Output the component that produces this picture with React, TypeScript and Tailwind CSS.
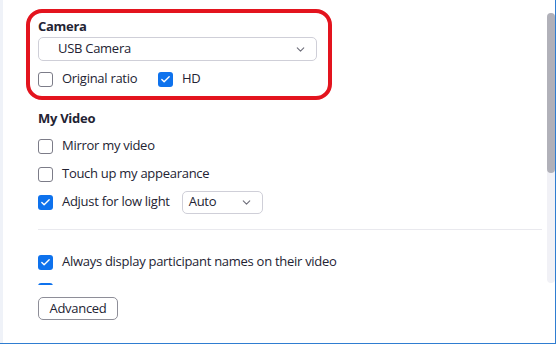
import { ChevronDown, Check } from "lucide-react";

const Box = ({ checked }: { checked: boolean }) =>
  checked ? (
    <span className="flex h-[15px] w-[15px] shrink-0 items-center justify-center rounded-[3px] bg-[#0e72ed]">
      <Check size={11} strokeWidth={3} className="text-white" />
    </span>
  ) : (
    <span className="h-[15px] w-[15px] shrink-0 rounded-[3px] border border-[#7c7c88] bg-white" />
  );

const Option = ({ label, checked }: { label: string; checked: boolean }) => (
  <label className="flex items-center gap-[9px]">
    <Box checked={checked} />
    <span>{label}</span>
  </label>
);

const App = () => {
  return (
    <div
      className="flex h-[344px] w-[556px] border-r border-b border-[#2f7dd1] bg-white text-[13px] tracking-[-0.28px] text-[#232333]"
      style={{ fontFamily: '"Open Sans", "Noto Sans", sans-serif' }}
    >
      <div className="w-[3px] bg-[#eff2f8]" />
      <div className="relative flex-1">
        <div className="h-[285px] overflow-hidden pl-[23px] pt-[9px]">
          {/* camera section */}
          <div className="w-[306px] rounded-[16px] border-4 border-[#e3141e] px-[8px] pt-[4px] pb-[10px]">
            <div className="h-[18px] font-bold leading-[18px]">Camera</div>
            <div className="mt-[2px] flex h-[24px] w-[279px] items-center justify-between rounded-[5px] border border-[#cfcfd8] pl-[19px] pr-[9px]">
              <span>USB Camera</span>
              <ChevronDown size={13} className="text-[#6e6e7a]" />
            </div>
            <div className="mt-[11px] flex h-[14px] items-center">
              <div className="w-[120px]">
                <Option label="Original ratio" checked={false} />
              </div>
              <Option label="HD" checked={true} />
            </div>
          </div>

          <div className="pl-[12px]">
            <div className="mt-[9px] h-[18px] font-bold leading-[18px]">My Video</div>
            <div className="mt-[5px] flex h-[28px] items-center">
              <Option label="Mirror my video" checked={false} />
            </div>
            <div className="flex h-[28px] items-center">
              <Option label="Touch up my appearance" checked={false} />
            </div>
            <div className="flex h-[28px] items-center">
              <Option label="Adjust for low light" checked={true} />
              <div className="ml-[12px] flex h-[23px] w-[81px] items-center justify-between rounded-[5px] border border-[#cfcfd8] pl-[6px] pr-[9px]">
                <span>Auto</span>
                <ChevronDown size={13} className="text-[#6e6e7a]" />
              </div>
            </div>
            <div className="mt-[13px] h-px w-[504px] bg-[#e9e9ee]" />
            <div className="mt-[18px] flex h-[28px] items-center">
              <Option label="Always display participant names on their video" checked={true} />
            </div>
            {/* next row, scrolled out of view */}
            <div className="flex h-[28px] items-center">
              <Box checked={true} />
            </div>
          </div>
        </div>

        <div className="pl-[35px] pt-[12px]">
          <button className="h-[23px] w-[80px] rounded-[5px] border border-[#8e8e98] bg-white text-[13px] text-[#232333]">
            Advanced
          </button>
        </div>

        {/* scrollbar */}
        <div className="absolute top-[13px] right-0 h-[270px] w-[8px] rounded-[4px] bg-[#f1f1f6]">
          <div className="h-[160px] w-full rounded-[4px] bg-[#b1b1b9]" />
        </div>
      </div>
    </div>
  );
};

export default App;
